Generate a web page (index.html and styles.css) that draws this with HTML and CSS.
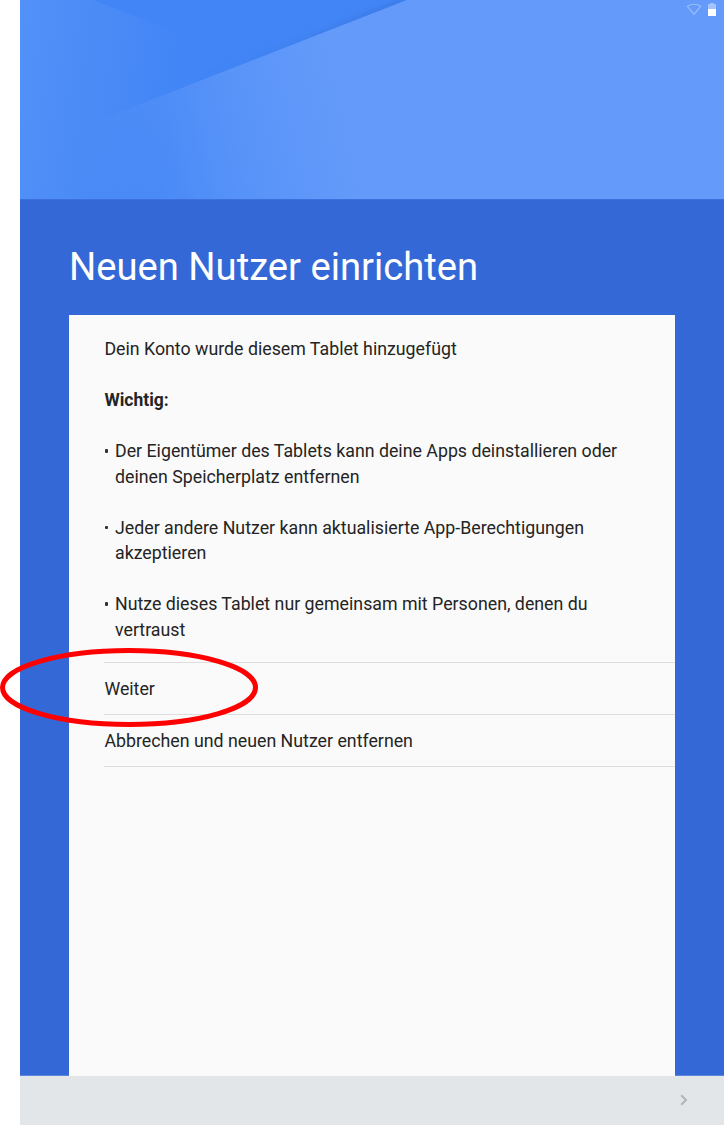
FILE: index.html
```
<!DOCTYPE html>
<html lang="de">
<head>
<meta charset="utf-8">
<title>Neuen Nutzer einrichten</title>
<link rel="stylesheet" href="styles.css">
</head>
<body>
<div class="tablet">
  <header class="banner">
    <svg class="banner-art" viewBox="0 0 704 199" preserveAspectRatio="none" aria-hidden="true">
      <defs>
        <linearGradient id="upper" gradientUnits="userSpaceOnUse" x1="0" y1="0" x2="165" y2="22">
          <stop offset="0" stop-color="#5391f9"/>
          <stop offset="0.5" stop-color="#4b8bf6"/>
          <stop offset="1" stop-color="#4285f6"/>
        </linearGradient>
        <linearGradient id="lower" gradientUnits="userSpaceOnUse" x1="58" y1="145" x2="320" y2="85">
          <stop offset="0" stop-color="#649bfa" stop-opacity="0"/>
          <stop offset="0.25" stop-color="#649bfa" stop-opacity="0.22"/>
          <stop offset="0.6" stop-color="#649bfa" stop-opacity="0.66"/>
          <stop offset="1" stop-color="#649bfa"/>
        </linearGradient>
        <linearGradient id="fold" gradientUnits="userSpaceOnUse" x1="180" y1="0" x2="387" y2="0">
          <stop offset="0" stop-color="#3974dd" stop-opacity="0"/>
          <stop offset="1" stop-color="#3974dd" stop-opacity="0.7"/>
        </linearGradient>
        <filter id="soft" x="-10%" y="-30%" width="120%" height="160%"><feGaussianBlur stdDeviation="2"/></filter>
        <clipPath id="above"><path d="M0 0H387L0 151Z"/></clipPath>
      </defs>
      <rect width="704" height="199" fill="url(#upper)"/>
      <path d="M73 0 165 35 190 40 400 0Z" fill="#4285f6"/>
      <g clip-path="url(#above)"><path d="M160 88 387 -1" stroke="url(#fold)" stroke-width="5" filter="url(#soft)"/></g>
      <path d="M387 0 0 151V199H704V0Z" fill="url(#lower)"/>
    </svg>
    <div class="status">
      <svg width="16" height="14" viewBox="0 0 16 14"><path d="M1.4 4.3Q8 .2 14.6 4.3L8 12.2Z" fill="none" stroke="#96bdfc" stroke-width="1.2"/></svg>
      <svg width="8" height="14" viewBox="0 0 8 14"><path d="M0 2H2V1H6V2H8V7H0Z" fill="#a2c3fc"/><path d="M0 7H8V14H0Z" fill="#fff"/></svg>
    </div>
  </header>
  <main class="setup">
    <h1 class="title">Neuen Nutzer einrichten</h1>
    <section class="card">
      <div class="message">
        <p>Dein Konto wurde diesem Tablet hinzugefügt</p>
        <p><strong>Wichtig:</strong></p>
        <ul class="notes">
          <li>Der Eigentümer des Tablets kann deine Apps deinstallieren oder<br>deinen Speicherplatz entfernen</li>
          <li>Jeder andere Nutzer kann aktualisierte App-Berechtigungen<br>akzeptieren</li>
          <li>Nutze dieses Tablet nur gemeinsam mit Personen, denen du<br>vertraust</li>
        </ul>
      </div>
      <div class="actions">
        <div class="action">Weiter</div>
        <div class="action">Abbrechen und neuen Nutzer entfernen</div>
      </div>
    </section>
  </main>
  <footer class="navbar">
    <svg width="8" height="12" viewBox="0 0 8 12"><path d="M1.2 1.3 6 6 1.2 10.7" fill="none" stroke="#b0b3b4" stroke-width="1.9"/></svg>
  </footer>
</div>
<svg class="highlight" width="260" height="82" viewBox="0 0 260 82" aria-hidden="true"><ellipse cx="129" cy="41.5" rx="126.5" ry="37" fill="none" stroke="#f00" stroke-width="5"/></svg>
</body>
</html>
```
FILE: styles.css
```
* { box-sizing: border-box; }
body {
  margin: 0;
  position: relative;
  height: 1125px;
  padding-left: 20px;
  background: #fff;
  color: #242424;
  font-family: Roboto, sans-serif;
  overflow: hidden;
}
.tablet {
  height: 1125px;
  display: flex;
  flex-direction: column;
}
.banner {
  position: relative;
  height: 199px;
  background: #649bfa;
}
.banner-art {
  display: block;
  width: 704px;
  height: 199px;
}
.status {
  position: absolute;
  top: 2px;
  right: 8px;
  display: flex;
  gap: 6px;
}
.setup {
  flex: 1;
  display: flex;
  flex-direction: column;
  padding: 45px 49px 0;
  background: #3568d7;
  border-top: 1px solid #3c70dd;
  border-bottom: 1px solid #5c87df;
}
.title {
  margin: 0;
  height: 70px;
  color: #fff;
  font-size: 38.2px;
  font-weight: 400;
  line-height: 44px;
  white-space: nowrap;
}
.card {
  flex: 1;
  margin-bottom: -1px;
  padding: 22px 0 0 35px;
  background: #fafafa;
  font-size: 17.77px;
}
.message {
  line-height: 25.5px;
  white-space: nowrap;
}
.message p {
  margin: 0 0 25.5px;
  padding-left: 0.4px;
}
.message strong { font-size: 17.5px; }
.notes {
  margin: 0;
  padding: 0;
  list-style: none;
}
.notes li {
  position: relative;
  padding-left: 11px;
}
.notes li + li { margin-top: 25.5px; }
.notes li::before {
  content: "";
  position: absolute;
  left: 0.5px;
  top: 10px;
  width: 3.5px;
  height: 3.5px;
  border-radius: 1px;
  background: #303030;
}
.actions {
  margin-top: 19px;
  border-top: 1px solid #dedede;
}
.action {
  height: 52px;
  padding-left: 0.4px;
  border-bottom: 1px solid #dedede;
  line-height: 52px;
}
.navbar {
  height: 49px;
  display: flex;
  align-items: center;
  justify-content: flex-end;
  padding: 0 36px 1px 0;
  background: #e2e6e9;
}
.highlight {
  position: absolute;
  left: 0;
  top: 646px;
}
```
